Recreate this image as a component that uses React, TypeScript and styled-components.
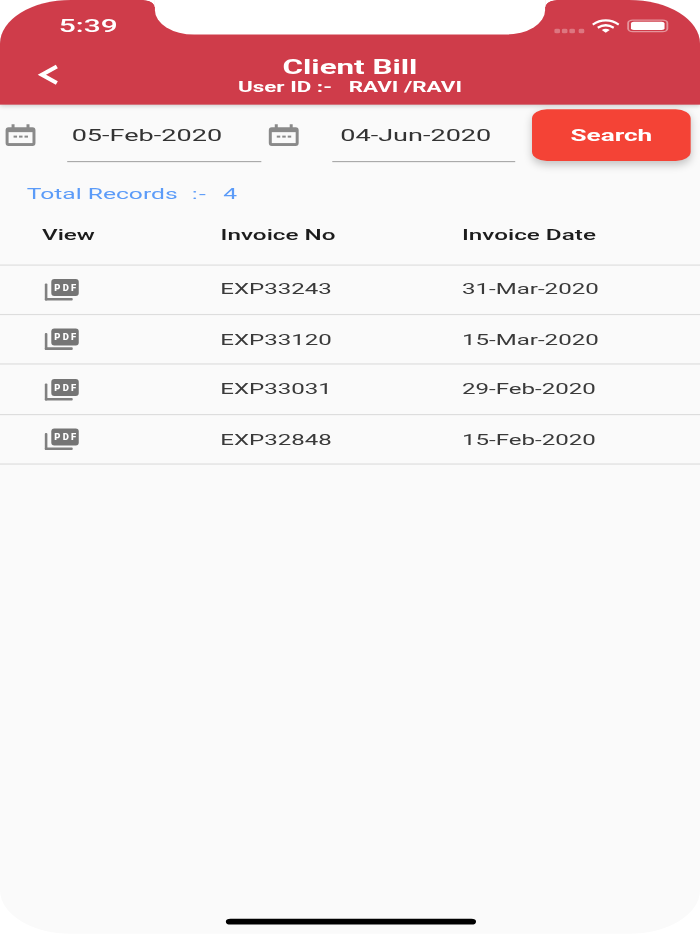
import styled, { createGlobalStyle } from "styled-components"

const GlobalStyle = createGlobalStyle`
    html, body, #root {
        margin: 0;
        height: 100%;
        background: #ffffff;
    }
    * {
        box-sizing: border-box;
    }
`

const records = [
    { no: "EXP33243", date: "31-Mar-2020" },
    { no: "EXP33120", date: "15-Mar-2020" },
    { no: "EXP33031", date: "29-Feb-2020" },
    { no: "EXP32848", date: "15-Feb-2020" },
]

function CalendarIcon() {
    return (
        <IconSvg $w={16} $h={19} viewBox="0 0 30 22" preserveAspectRatio="none">
            <path d="M6 0h3v3h12V0h3v3h3a3 3 0 0 1 3 3v13a3 3 0 0 1-3 3H3a3 3 0 0 1-3-3V6a3 3 0 0 1 3-3h3z" fill="#8a8a8a" />
            <rect x="3" y="8" width="24" height="11" fill="#fafafa" />
            <rect x="8" y="11.5" width="3.5" height="2" fill="#8a8a8a" />
            <rect x="13.5" y="11.5" width="3.5" height="2" fill="#8a8a8a" />
            <rect x="19" y="11.5" width="3.5" height="2" fill="#8a8a8a" />
        </IconSvg>
    )
}

function PdfIcon() {
    return (
        <IconSvg $w={18.2} $h={18.3} viewBox="0 0 34 21" preserveAspectRatio="none">
            <rect x="0" y="4" width="2.6" height="17" rx="1" fill="#808080" />
            <rect x="0" y="18.4" width="28" height="2.6" rx="1" fill="#808080" />
            <rect x="6.5" y="-0.5" width="27.5" height="17" rx="3" fill="#757575" />
            <PdfLabel x="20.5" y="11.5" textLength="22" lengthAdjust="spacing">PDF</PdfLabel>
        </IconSvg>
    )
}

function BackIcon() {
    return (
        <IconSvg $w={11} $h={18} viewBox="0 0 20 20" preserveAspectRatio="none">
            <path d="M19 2 4.500 10 19 18" fill="none" stroke="#ffffff" strokeWidth="4" />
        </IconSvg>
    )
}

function WifiIcon() {
    return (
        <IconSvg $w={15} $h={11.5} viewBox="0 0 28 13" preserveAspectRatio="none">
            <path d="M1 5C9-.6 19-.6 27 5M6 8c5-3 11-3 16 0" fill="none" stroke="#ffffff" strokeWidth="2.2" />
            <path d="M10 10.200c2.600-1.400 5.400-1.400 8 0L14 13z" fill="#ffffff" />
        </IconSvg>
    )
}

export default function App() {
    return (
        <Viewport>
            <GlobalStyle />
            <Screen>
                <Notch />
                <Header>
                    <StatusBar>
                        <Clock>5:39</Clock>
                        <StatusIcons>
                            <SignalDots>
                                <Dot />
                                <Dot />
                                <Dot />
                                <Dot />
                            </SignalDots>
                            <WifiIcon />
                            <Battery>
                                <BatteryFill />
                            </Battery>
                        </StatusIcons>
                    </StatusBar>
                    <NavBar>
                        <BackButton>
                            <BackIcon />
                        </BackButton>
                        <TitleBlock>
                            <Title>Client Bill</Title>
                            <SubTitle>{"User ID :-   RAVI /RAVI"}</SubTitle>
                        </TitleBlock>
                    </NavBar>
                </Header>

                <FilterRow>
                    <CalendarIcon />
                    <DateField $w={103.4} $inset={2}>05-Feb-2020</DateField>
                    <CalendarIcon />
                    <DateField $w={98.1} $inset={4}>04-Jun-2020</DateField>
                    <SearchButton>Search</SearchButton>
                </FilterRow>

                <TotalRecords>
                    Total Records<Colon>:-</Colon>4
                </TotalRecords>

                <HeadRow>
                    <HeadCell>View</HeadCell>
                    <HeadCell>Invoice No</HeadCell>
                    <HeadCell>Invoice Date</HeadCell>
                </HeadRow>

                {records.map((r) => (
                    <Row key={r.no}>
                        <PdfIcon />
                        <Cell>{r.no}</Cell>
                        <Cell>{r.date}</Cell>
                    </Row>
                ))}

                <HomeIndicator />
            </Screen>
        </Viewport>
    )
}

const Viewport = styled.div`
    width: 700px;
    height: 934px;
    overflow: hidden;
`

/* the shot is a 375x812 phone stretched to 700x934, so lay out at phone size and scale */
const Screen = styled.div`
    position: relative;
    width: 375px;
    height: 812.200px;
    display: flex;
    flex-direction: column;
    overflow: hidden;
    background: #fafafa;
    border-radius: 38px;
    transform: scale(1.8667, 1.15);
    transform-origin: 0 0;
    filter: blur(0.25px);
    font-family: "Roboto", "Liberation Sans", sans-serif;
`

const Notch = styled.div`
    position: absolute;
    top: 0;
    left: 83px;
    width: 209px;
    height: 30px;
    z-index: 2;
    background: #ffffff;
    border-radius: 0 0 21px 21px;

    &::before,
    &::after {
        content: "";
        position: absolute;
        top: 0;
        width: 6px;
        height: 6px;
    }
    &::before {
        left: -6px;
        background: radial-gradient(circle at 0 100%, transparent 5.5px, #ffffff 6px);
    }
    &::after {
        right: -6px;
        background: radial-gradient(circle at 100% 100%, transparent 5.5px, #ffffff 6px);
    }
`

const Header = styled.div`
    height: 91px;
    flex-shrink: 0;
    display: flex;
    flex-direction: column;
    background: #cf3c4a;
    box-shadow: 0 1px 3px rgba(0, 0, 0, 0.18);
    position: relative;
`

const StatusBar = styled.div`
    height: 44px;
    display: flex;
    justify-content: space-between;
    align-items: flex-start;
    padding: 14px 17px 0 31.500px;
`

const Clock = styled.div`
    color: #ffffff;
    font-size: 16px;
    line-height: 18px;
    font-weight: 500;
`

const StatusIcons = styled.div`
    display: flex;
    align-items: center;
    gap: 3.500px;
    padding-top: 3px;
`

const SignalDots = styled.div`
    display: flex;
    gap: 1.200px;
    margin-top: 8px;
    margin-right: 0.500px;
`

const Dot = styled.div`
    width: 3px;
    height: 3.500px;
    border-radius: 1px;
    background: rgba(255, 255, 255, 0.3);
`

const Battery = styled.div`
    width: 22px;
    height: 11px;
    margin-left: 1px;
    padding: 1px;
    border: 1px solid rgba(255, 255, 255, 0.45);
    border-radius: 3px;
`

const BatteryFill = styled.div`
    height: 100%;
    background: #ffffff;
    border-radius: 1.500px;
`

const NavBar = styled.div`
    height: 47px;
    position: relative;
    display: flex;
    justify-content: center;
    align-items: center;
`

const BackButton = styled.div`
    position: absolute;
    left: 20px;
    top: 12px;
    display: flex;
`

const TitleBlock = styled.div`
    display: flex;
    flex-direction: column;
    align-items: center;
    color: #ffffff;
    margin-top: -3.500px;
`

const Title = styled.div`
    font-size: 16.800px;
    line-height: 21px;
    font-weight: 700;
`

const SubTitle = styled.div`
    font-size: 12px;
    line-height: 14px;
    font-weight: 700;
    white-space: pre;
`

const IconSvg = styled.svg<{ $w: number; $h: number }>`
    width: ${(p) => p.$w}px;
    height: ${(p) => p.$h}px;
    flex-shrink: 0;
    display: block;
    overflow: visible;
`

const PdfLabel = styled.text`
    fill: #ffffff;
    font-family: "Roboto", sans-serif;
    font-size: 9.500px;
    font-weight: 900;
    text-anchor: middle;
`

const FilterRow = styled.div`
    height: 52px;
    display: flex;
    align-items: center;
    padding-left: 3.200px;
    position: relative;

    & > svg:nth-child(1) {
        margin-right: 17.200px;
    }
    & > svg:nth-child(3) {
        margin-left: 4.500px;
        margin-right: 18px;
    }
`

const DateField = styled.div<{ $w: number; $inset: number }>`
    width: ${(p) => p.$w}px;
    height: 43.500px;
    margin-top: 3.500px;
    padding: 12.500px 0 0 ${(p) => p.$inset}px;
    border-bottom: 1px solid #aaaaaa;
    font-size: 14.500px;
    line-height: 17px;
    color: #333333;
`

const SearchButton = styled.button`
    width: 85.700px;
    height: 44.500px;
    margin-left: 8.300px;
    margin-top: 1px;
    border: none;
    border-radius: 8px;
    background: #f44336;
    box-shadow: 0 3px 6px rgba(0, 0, 0, 0.22);
    color: #ffffff;
    font-family: inherit;
    font-size: 14px;
    font-weight: 700;
`

const TotalRecords = styled.div`
    margin: 18px 0 0 14.300px;
    font-size: 13.200px;
    line-height: 15px;
    color: #5b9bf8;
`

const Colon = styled.span`
    margin: 0 8.500px 0 7.500px;
    letter-spacing: 0.800px;
`

const HeadRow = styled.div`
    height: 41px;
    margin-top: 13.500px;
    display: grid;
    grid-template-columns: 95.700px 129.300px 1fr;
    align-items: start;
    padding: 7px 0 0 22.500px;
    border-bottom: 1px solid #dddddd;
`

const HeadCell = styled.div`
    font-size: 13px;
    line-height: 15px;
    font-weight: 500;
    color: #1c1c1c;
`

const Row = styled.div`
    height: 43.480px;
    display: grid;
    grid-template-columns: 96px 129px 1fr;
    align-items: center;
    padding-left: 23.500px;
    border-bottom: 1px solid #dddddd;

    & > div:nth-child(2) {
        margin-left: -1.500px;
    }
    & > div:nth-child(3) {
        margin-left: -1px;
    }
`

const Cell = styled.div`
    font-size: 12.900px;
    line-height: 15px;
    color: #3a3a3a;
`

const HomeIndicator = styled.div`
    width: 134px;
    height: 5px;
    margin: auto auto 8px;
    border-radius: 3px;
    background: #000000;
`
